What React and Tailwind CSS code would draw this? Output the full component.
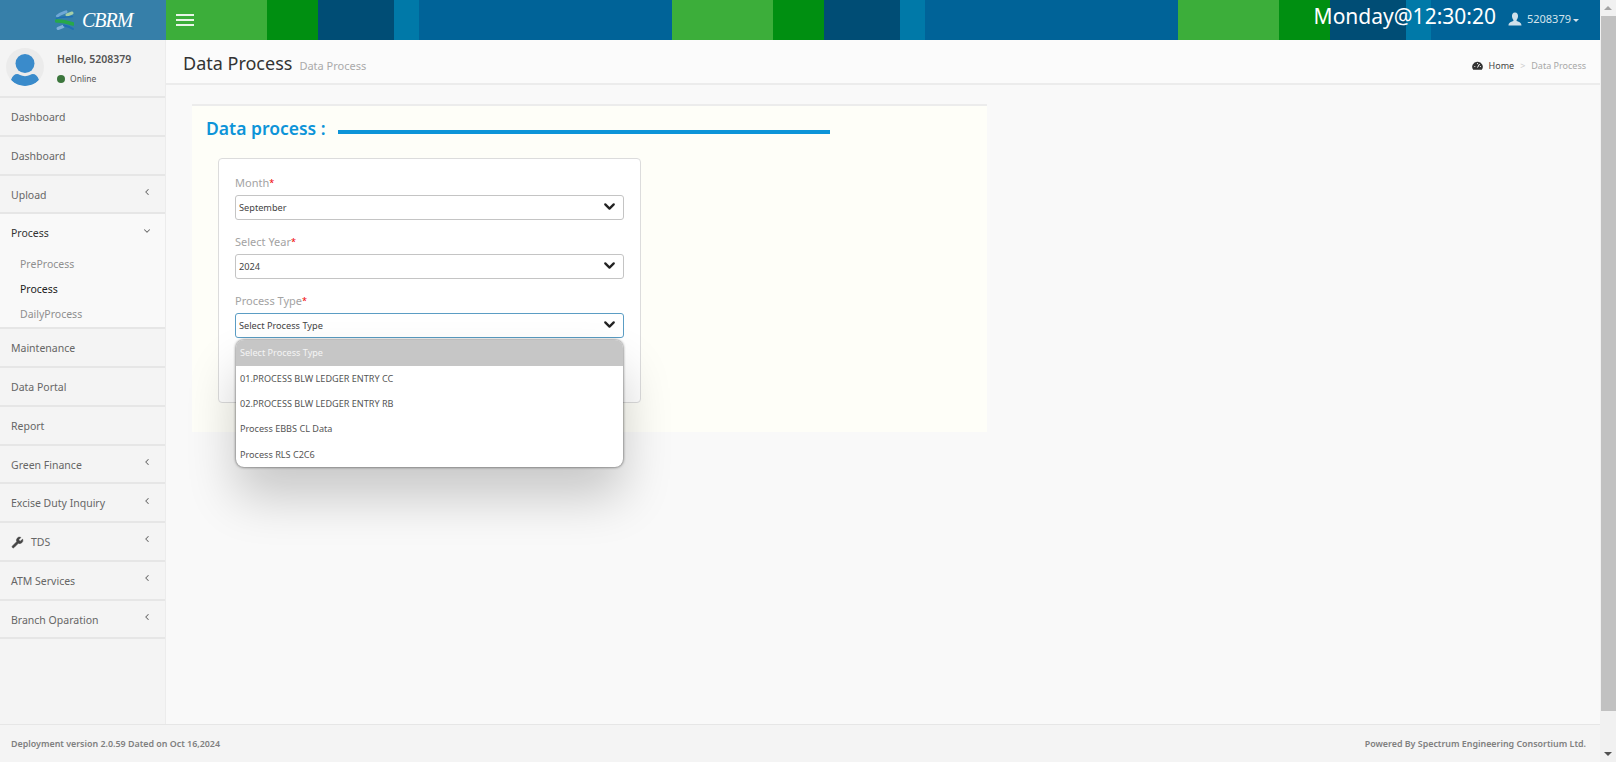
import { ChevronLeft, ChevronDown, Wrench } from 'lucide-react';

const FONT = "font-['Noto_Sans',sans-serif]";

const MENU = [
  { label: 'Dashboard' },
  { label: 'Dashboard' },
  { label: 'Upload', arrow: true },
  { label: 'Process', open: true, children: ['PreProcess', 'Process', 'DailyProcess'] },
  { label: 'Maintenance' },
  { label: 'Data Portal' },
  { label: 'Report' },
  { label: 'Green Finance', arrow: true },
  { label: 'Excise Duty Inquiry', arrow: true },
  { label: 'TDS', arrow: true, icon: true },
  { label: 'ATM Services', arrow: true },
  { label: 'Branch Oparation', arrow: true },
];

const OPTIONS = ['01.PROCESS BLW LEDGER ENTRY CC', '02.PROCESS BLW LEDGER ENTRY RB', 'Process EBBS CL Data', 'Process RLS C2C6'];

function SelectBox({ label, value, focused, className }) {
  return (
    <div className={className}>
      <div className="h-[19px] text-[11px] leading-[19px] text-[#a3a3a3]">
        {label}<span className="align-[1px] text-[9px] text-[#f00000]">*</span>
      </div>
      <div className={`mt-[3px] flex h-[25px] items-center justify-between rounded-[3px] border bg-white pl-[3px] pr-[5px] text-[9.2px] text-[#444] ${focused ? 'border-[#5b9dc4]' : 'border-[#c4c4c4]'}`}>
        <span>{value}</span>
        <ChevronDown size={17} strokeWidth={3.2} className="mb-[3px] text-[#222]" />
      </div>
    </div>
  );
}

function SidebarItem({ item }) {
  return (
    <div className={`border-b-2 border-[#e6e6e6] ${item.open ? 'bg-[#f9f9f9]' : ''}`}>
      <div className={`flex h-[36.75px] items-center justify-between pl-[11px] pr-[13px] pt-[3px] text-[10.5px] ${item.open ? 'text-[#333]' : 'text-[#666]'}`}>
        <span className="flex items-center gap-[7px]">
          {item.icon && <Wrench size={13} fill="#444" strokeWidth={1} className="text-[#444]" />}
          {item.label}
        </span>
        {item.arrow && <ChevronLeft size={10} strokeWidth={2.5} className="mb-[7px] text-[#666]" />}
        {item.open && <ChevronDown size={10} strokeWidth={2.5} className="mb-[7px] text-[#666]" />}
      </div>
      {item.children && (
        <div className="pt-[1px]">
          {item.children.map((c) => (
            <div key={c} className={`flex h-[25.1px] items-center pl-[20px] text-[10.5px] ${c === 'Process' ? 'text-[#222]' : 'text-[#8f8f8f]'}`}>{c}</div>
          ))}
        </div>
      )}
    </div>
  );
}

function Scrollbar() {
  return (
    <div className="flex h-[762px] w-[16px] shrink-0 flex-col items-center bg-[#f1f1f1]">
      <div className="flex h-[16px] items-center">
        <div className="h-0 w-0 border-x-[4px] border-b-[4px] border-x-transparent border-b-[#a3a3a3]" />
      </div>
      <div className="h-[695px] w-[15px] bg-[#c1c1c1]" />
      <div className="flex flex-1 items-end pb-[6px]">
        <div className="h-0 w-0 border-x-[4px] border-t-[4px] border-x-transparent border-t-[#505050]" />
      </div>
    </div>
  );
}

export default function App() {
  return (
    <div className={`flex h-[762px] w-[1616px] overflow-hidden bg-[#f9f9f9] ${FONT}`}>
      <div className="flex min-w-0 flex-1 flex-col">
        {/* Top bar */}
        <header className="flex h-[40px] shrink-0 text-white">
          <div className="flex w-[166px] items-center gap-[8px] bg-[#367fa9] pl-[55px]">
            <svg width="19" height="21" viewBox="0 0 19 21" fill="none" strokeLinecap="round">
              <path d="M2.5 6 C5 3.5 8 3 11 1.8" stroke="#6fa8d6" strokeWidth="3" />
              <path d="M12 5 L17 3" stroke="#a5cfa8" strokeWidth="3" />
              <path d="M1.5 8.5 C6 6 12 7.5 17.5 6.5" stroke="#1e6fb5" strokeWidth="1.5" />
              <path d="M1.5 11 C7 10.5 12 12 18 14" stroke="#27a84a" strokeWidth="3.5" />
              <path d="M3 18.5 L8 16.5" stroke="#7fb0d8" strokeWidth="3" />
              <path d="M9 15.5 C12 16 15 17 18 19" stroke="#1e6fb5" strokeWidth="2" />
            </svg>
            <span className="font-['Liberation_Serif',serif] text-[20px] italic leading-none tracking-[-1px]">CBRM</span>
          </div>
          <div className="flex flex-1 items-center justify-between bg-[linear-gradient(90deg,#3cae3a_0,#3cae3a_101px,#008f11_101px,#008f11_152px,#004d75_152px,#004d75_228px,#0079a8_228px,#0079a8_253px,#006398_253px,#006398_506px,#3cae3a_506px,#3cae3a_607px,#008f11_607px,#008f11_658px,#004d75_658px,#004d75_734px,#0079a8_734px,#0079a8_759px,#006398_759px,#006398_1012px,#3cae3a_1012px,#3cae3a_1113px,#008f11_1113px,#008f11_1164px,#004d75_1164px,#004d75_1240px,#0079a8_1240px,#0079a8_1265px,#006398_1265px)] pl-[10px] pr-[21px]">
            <div className="flex w-[18px] flex-col gap-[3px]">
              <div className="h-[2px] bg-[#e8f5e8]" />
              <div className="h-[2px] bg-[#e8f5e8]" />
              <div className="h-[2px] bg-[#e8f5e8]" />
            </div>
            <div className="flex items-center">
              <span className="mb-[8px] text-[21px] leading-none">Monday@12:30:20</span>
              <svg width="14" height="14" viewBox="0 0 14 14" className="mb-[2px] ml-[12px] text-[#cfe0ea]" fill="currentColor">
                <path d="M7 0.5 C9.2 0.5 10.2 2.2 10 4.5 C9.9 6 9.2 7.2 8.6 8 L8.6 9 C10.5 9.8 13.5 10.3 13.5 13.5 L0.5 13.5 C0.5 10.3 3.5 9.8 5.4 9 L5.4 8 C4.8 7.2 4.1 6 4 4.5 C3.8 2.2 4.8 0.5 7 0.5 Z" />
              </svg>
              <span className="mb-[2px] ml-[5px] text-[11px] text-[#d5e3ec]">5208379</span>
              <div className="ml-[2px] h-0 w-0 border-x-[3px] border-t-[3px] border-x-transparent border-t-[#d5e3ec]" />
            </div>
          </div>
        </header>

        <div className="flex min-h-0 flex-1">
          {/* Sidebar */}
          <aside className="w-[166px] shrink-0 border-r border-[#ececec] bg-[#f4f4f4]">
            <div className="flex h-[58px] border-b-2 border-[#e6e6e6] pl-[6px] pt-[8px]">
              <div className="flex h-[38px] w-[38px] items-center justify-center overflow-hidden rounded-full bg-[#ebebeb]">
                <svg width="38" height="38" viewBox="0 0 38 38" fill="#3a8bcb">
                  <circle cx="19" cy="15.5" r="9.5" />
                  <path d="M5 32 C7 26 11 25 14 27 C17 28.5 21 28.5 24 27 C27 25 31 26 33 32 C29 37 24 38 19 38 C14 38 9 37 5 32 Z" />
                </svg>
              </div>
              <div className="ml-[13px]">
                <div className="mt-[3px] text-[10.5px] font-semibold leading-[16px] text-[#555]">Hello, 5208379</div>
                <div className="mt-[6px] flex items-center gap-[5px] text-[8.5px] text-[#555]">
                  <span className="h-[8px] w-[8px] rounded-full bg-[#3c763d]" />
                  Online
                </div>
              </div>
            </div>
            {MENU.map((item, i) => <SidebarItem key={i} item={item} />)}
          </aside>

          {/* Main */}
          <main className="flex min-w-0 flex-1 flex-col">
            <div className="flex h-[45px] shrink-0 items-center justify-between border-b-2 border-[#ececec] bg-[#fbfbfb] pl-[17px] pr-[14px] pt-[3px]">
              <div className="flex items-baseline gap-[7px]">
                <span className="text-[18px] text-[#333]">Data Process</span>
                <span className="text-[11px] text-[#aaa]">Data Process</span>
              </div>
              <div className="mt-[5px] flex items-center text-[9px]">
                <svg width="11" height="10" viewBox="0 0 11 10" className="mr-[6px]">
                  <path d="M5.5 0.8 A5 5 0 0 0 1.2 8.8 L9.8 8.8 A5 5 0 0 0 5.5 0.8 Z" fill="#333" />
                  <path d="M5.5 6.5 L7.5 3" stroke="#fff" strokeWidth="1" />
                  <circle cx="2.8" cy="5.5" r="0.6" fill="#fff" />
                  <circle cx="5.5" cy="2.6" r="0.6" fill="#fff" />
                  <circle cx="8.4" cy="5.5" r="0.6" fill="#fff" />
                </svg>
                <span className="text-[#444]">Home</span>
                <span className="mx-[6px] text-[#ccc]">&gt;</span>
                <span className="text-[#a8a8a8]">Data Process</span>
              </div>
            </div>

            <div className="min-h-0 flex-1 pl-[26px] pt-[19px]">
              <section className="h-[328px] w-[795px] border-t-2 border-[#ececec] bg-[#fefef8] pl-[14px] pt-[9px]">
                <div className="flex items-center">
                  <h2 className="text-[17.5px] font-semibold leading-[26px] text-[#0d94d8]">Data process :</h2>
                  <div className="ml-[12px] mt-[8px] h-[4px] w-[492px] bg-[#0d94d8]" />
                </div>
                <div className="relative ml-[12px] mt-[17px] h-[245px] w-[423px] rounded-[4px] border border-[#dcdcdc] bg-white px-[16px] pt-[14px]">
                  <SelectBox label="Month" value="September" />
                  <SelectBox label="Select Year" value="2024" className="mt-[12px]" />
                  <SelectBox label="Process Type" value="Select Process Type" focused className="mt-[12px]" />
                  <ul className="absolute left-[17px] top-[181px] w-[387px] overflow-hidden rounded-[8px] bg-white text-[9.1px] text-[#555] shadow-[0_0_3px_rgba(0,0,0,0.7),0_30px_50px_rgba(0,0,0,0.2)]">
                    <li className="flex h-[26px] items-center bg-[#c6c6c6] pl-[4px] text-[#f5f5f5]">Select Process Type</li>
                    {OPTIONS.map((o) => (
                      <li key={o} className="flex h-[25.3px] items-center pl-[4px]">{o}</li>
                    ))}
                  </ul>
                </div>
              </section>
            </div>
          </main>
        </div>

        {/* Footer */}
        <div className="flex h-[38px] shrink-0 items-center justify-between border-t border-[#e6e6e6] bg-[#f4f4f4] pl-[11px] pr-[14px] text-[8.9px] font-semibold text-[#808080]">
          <span>Deployment version 2.0.59 Dated on Oct 16,2024</span>
          <span>Powered By Spectrum Engineering Consortium Ltd.</span>
        </div>
      </div>
      <Scrollbar />
    </div>
  );
}
